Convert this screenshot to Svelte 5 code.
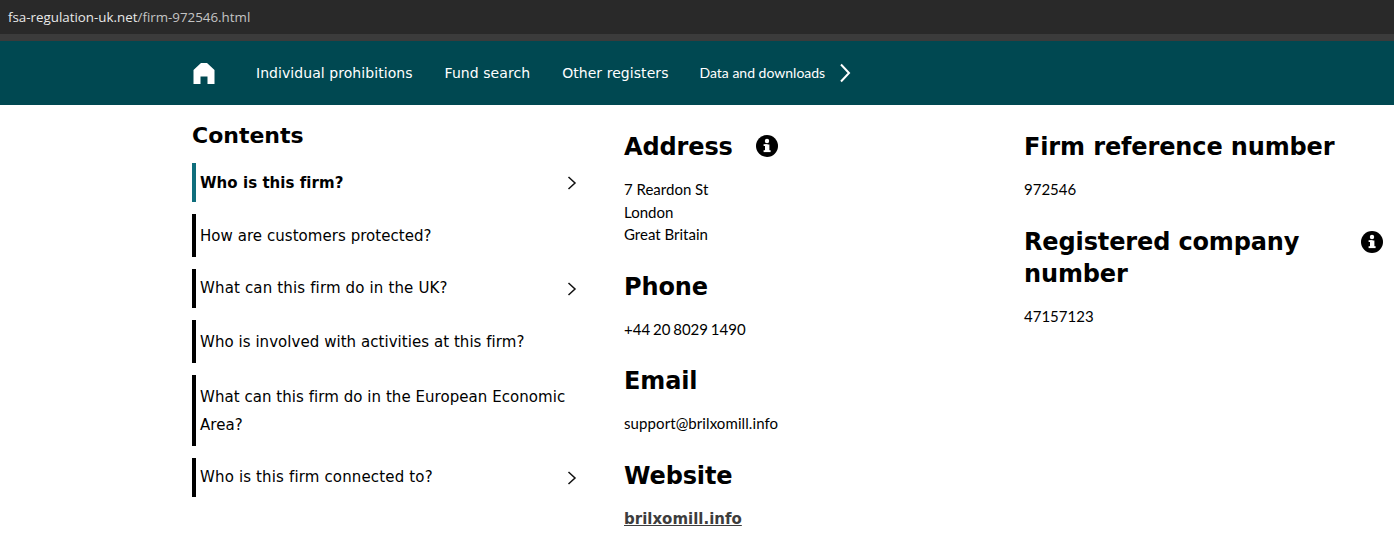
<script>
	const contents = [
		{ label: 'Who is this firm?', active: true, arrow: true, size: 'short' },
		{ label: 'How are customers protected?', size: 'mid' },
		{ label: 'What can this firm do in the UK?', arrow: true, size: 'short' },
		{ label: 'Who is involved with activities at this firm?', size: 'mid' },
		{ label: 'What can this firm do in the European Economic Area?', size: 'tall' },
		{ label: 'Who is this firm connected to?', arrow: true, size: 'short' }
	];
</script>

{#snippet info()}
	<svg class="info" viewBox="0 0 22 22" aria-hidden="true">
		<circle cx="11" cy="11" r="11" fill="#000" />
		<rect x="9" y="9.5" width="4.4" height="7" fill="#fff" />
		<rect x="7.6" y="9.2" width="4" height="1.8" fill="#fff" />
		<rect x="7.6" y="15.2" width="7" height="1.9" fill="#fff" />
		<circle cx="11" cy="6" r="2.2" fill="#fff" />
	</svg>
{/snippet}

<div class="urlbar"><span>fsa-regulation-uk.net</span><span class="path">/firm-972546.html</span></div>

<nav>
	<svg class="home" viewBox="0 0 22 22" aria-hidden="true">
		<path d="M0.500 8 L8 1 H14 L21.500 8 V22 H14.500 V14.500 H7.500 V22 H0.500 Z" fill="#fff" />
	</svg>
	<a href="#top" class="ind">Individual prohibitions</a>
	<a href="#top" class="fund">Fund search</a>
	<a href="#top" class="other">Other registers</a>
	<a href="#top" class="data">Data and downloads</a>
	<svg class="nav-arrow" viewBox="0 0 12 20" aria-hidden="true">
		<path d="M2 1.500 L10 10 L2 18.500" fill="none" stroke="#fff" stroke-width="2" />
	</svg>
</nav>

<main>
	<aside>
		<h3>Contents</h3>
		<ul>
			{#each contents as item}
				<li class="{item.size}" class:active={item.active}>
					<span>{item.label}</span>
					{#if item.arrow}
						<svg class="chevron" viewBox="0 0 10 14" aria-hidden="true">
							<path d="M1.500 1 L8 7 L1.500 13" fill="none" stroke="#111" stroke-width="1.500" />
						</svg>
					{/if}
				</li>
			{/each}
		</ul>
	</aside>

	<section class="middle">
		<div class="heading address"><h2>Address</h2>{@render info()}</div>
		<p class="addr">7 Reardon St<br />London<br />Great Britain</p>
		<h2 class="block">Phone</h2>
		<p class="tel">+44 20 8029 1490</p>
		<h2 class="block">Email</h2>
		<p class="mail">support@brilxomill.info</p>
		<h2 class="block">Website</h2>
		<a href="#top" class="site">brilxomill.info</a>
	</section>

	<section class="right">
		<h2>Firm reference number</h2>
		<p>972546</p>
		<div class="heading reg"><h2>Registered company number</h2>{@render info()}</div>
		<p>47157123</p>
	</section>
</main>

<style>
	:global(body) {
		background: #fff;
		color: #000;
		font-family: 'DejaVu Sans', sans-serif;
	}

	.urlbar {
		height: 34px;
		padding-left: 8px;
		border-bottom: 7px solid #3b3b3b;
		background: #292929;
		color: #e8e8e8;
		font-family: 'Open Sans', sans-serif;
		font-size: 13.350px;
		line-height: 35px;
	}

	.path {
		color: #c4c4c4;
	}

	nav {
		display: flex;
		align-items: center;
		height: 64px;
		padding-left: 193px;
		background: #004851;
	}

	nav a {
		color: #fff;
		font-size: 14px;
		letter-spacing: 0.06px;
		text-decoration: none;
	}

	.home {
		width: 22px;
		height: 22px;
		margin-right: 41px;
	}

	.ind {
		margin-right: 32px;
	}

	.fund {
		margin-right: 32px;
	}

	.other {
		margin-right: 31px;
	}

	nav .data {
		margin-bottom: 2px;
		font-family: Lato, sans-serif;
		font-size: 14px;
		letter-spacing: 0;
	}

	.nav-arrow {
		width: 12px;
		height: 20px;
		margin-left: 14px;
	}

	main {
		display: flex;
		padding-left: 192px;
	}

	aside {
		width: 390px;
		margin-right: 42px;
		padding-top: 18px;
	}

	h3 {
		margin: 0;
		font-size: 22px;
		font-weight: 700;
		line-height: 26px;
	}

	ul {
		display: grid;
		gap: 12px;
		margin: 14px 0 0;
		padding: 0;
		list-style: none;
	}

	li {
		display: flex;
		align-items: center;
		justify-content: space-between;
		padding: 0 5px 0 4px;
		border-left: 4px solid #000;
		font-size: 15px;
		letter-spacing: 0.05px;
		line-height: 28px;
	}

	li.short {
		height: 39px;
	}

	li.short:not(.active) span {
		margin-bottom: 2px;
		letter-spacing: 0.15px;
	}

	li.mid {
		height: 43px;
	}

	li.tall {
		height: 71px;
	}

	li.active {
		border-left-color: #0f6e7c;
		font-weight: 700;
	}

	.chevron {
		flex: none;
		width: 10px;
		height: 14px;
	}

	h2 {
		margin: 0;
		font-size: 24px;
		font-weight: 700;
		letter-spacing: -0.13px;
		line-height: 32px;
	}

	p {
		margin: 0;
		font-family: Lato, sans-serif;
		font-size: 15px;
		line-height: 22.500px;
	}

	.middle {
		width: 400px;
		padding-top: 26px;
	}

	.heading {
		display: flex;
		align-items: flex-start;
	}

	.address .info {
		margin: 4px 0 0 23px;
	}

	.info {
		flex: none;
		width: 22px;
		height: 22px;
	}

	.addr {
		margin-top: 15px;
	}

	.block {
		margin-top: 25px;
	}

	.middle h2 + p {
		margin-top: 15px;
	}

	.tel {
		word-spacing: -1px;
	}

	.mail {
		letter-spacing: 0.09px;
	}

	.site {
		display: block;
		margin-top: 16px;
		color: #3d3d3d;
		font-size: 15px;
		font-weight: 700;
		line-height: 22px;
	}

	.right {
		width: 359px;
		padding-top: 26px;
	}

	.right p {
		margin-top: 15px;
	}

	.reg {
		justify-content: space-between;
		margin-top: 25px;
	}

	.reg h2 {
		width: 310px;
	}

	.reg .info {
		margin-top: 5px;
	}
</style>
